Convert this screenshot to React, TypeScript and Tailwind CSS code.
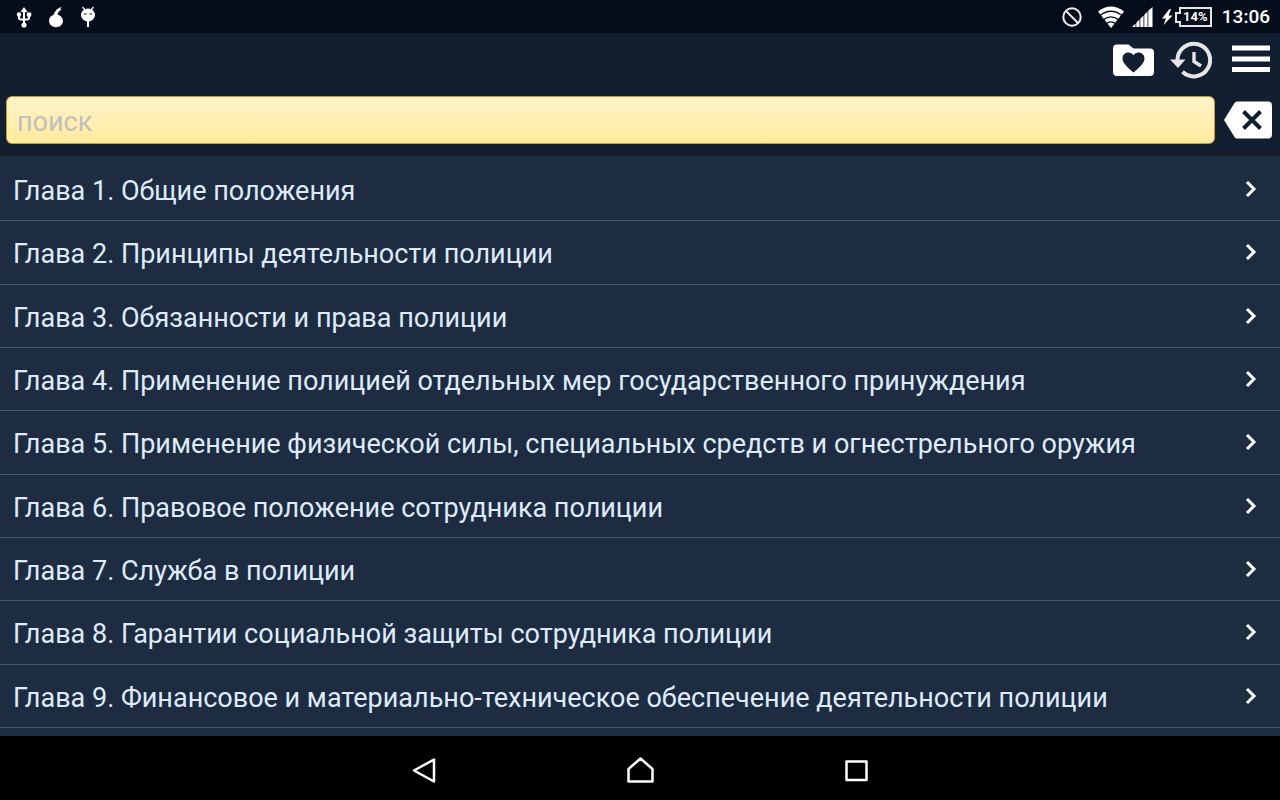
import { useState } from 'react'

const chapters = [
  'Глава 1. Общие положения',
  'Глава 2. Принципы деятельности полиции',
  'Глава 3. Обязанности и права полиции',
  'Глава 4. Применение полицией отдельных мер государственного принуждения',
  'Глава 5. Применение физической силы, специальных средств и огнестрельного оружия',
  'Глава 6. Правовое положение сотрудника полиции',
  'Глава 7. Служба в полиции',
  'Глава 8. Гарантии социальной защиты сотрудника полиции',
  'Глава 9. Финансовое и материально-техническое обеспечение деятельности полиции',
]

function StatusBar() {
  return (
    <div className="h-[33px] shrink-0 bg-[#060d1a] flex items-center justify-between pl-4 pr-[10px] text-white">
      <div className="flex items-center gap-4">
        <svg width="16" height="22" viewBox="0 0 16 22" fill="none" stroke="#fff" strokeWidth="2">
          <path d="M8 4v14M3 9v2.500q0 2 2 2h6q2 0 2-2V8" />
          <path d="M8 1l3.500 5h-7z" fill="#fff" stroke="none" />
          <circle cx="8" cy="19" r="2.600" fill="#fff" stroke="none" />
          <circle cx="3" cy="8.500" r="2.200" fill="#fff" stroke="none" />
          <path d="M10.800 6.500h4.400v4h-4.400z" fill="#fff" stroke="none" />
        </svg>
        <svg width="16" height="22" viewBox="0 0 16 22" fill="#fff">
          <path d="M5.500 9C6.500 5.500 9.500 2 13.500 1L12 3.500l2-.5C11 5 9.800 6.500 9.500 8.500c3 1 5.500 3.500 5.500 6 0 4-3 6.700-7 6.700s-7-2.700-7-6.400C1 12 2.500 9.800 5.500 9z" />
        </svg>
        <svg width="16" height="22" viewBox="0 0 16 22" fill="#fff">
          <path d="M2.500 1l2.500 3M13.500 1L11 4" stroke="#fff" strokeWidth="1.300" />
          <ellipse cx="8" cy="9" rx="7" ry="6.500" />
          <path d="M4 8h2.500M9.500 8H12" stroke="#060d1a" strokeWidth="1.200" />
          <path d="M7 15h2v6H7z" />
        </svg>
      </div>
      <div className="flex items-center">
        <svg width="20" height="20" viewBox="0 0 20 20" fill="none" stroke="#eee" strokeWidth="2">
          <circle cx="10" cy="10" r="8.700" />
          <path d="M4 4l12 12" />
        </svg>
        <svg className="ml-4" width="26" height="22" viewBox="0 0 26 22">
          <path d="M0 5.500Q13-4.500 26 5.500L13 22z" fill="#fff" />
          <path d="M2 9.500q11-8.500 22 0M5.500 13.800q7.500-5.800 15 0M8.500 17.600q4.500-3.500 9 0" fill="none" stroke="#060d1a" strokeWidth="1.300" />
        </svg>
        <svg className="ml-2" width="21" height="20" viewBox="0 0 21 20" fill="#fff">
          <path d="M0 20l3.500-3.500V20zM4.300 15.700l3.200-3.200V20H4.300zM8.300 11.700l3.200-3.200V20H8.300zM12.300 7.700l3.200-3.200V20h-3.200zM16.300 3.700L20.500 0v20h-4.200z" />
        </svg>
        <svg className="ml-2" width="12" height="18" viewBox="0 0 12 18" fill="#fff">
          <path d="M8.500 1L1 10.500h4L2.500 17 11.500 7.500h-4L10 1z" />
        </svg>
        <div className="relative ml-0.5 h-5 w-[37px]">
          <svg className="absolute inset-0" width="37" height="20" viewBox="0 0 37 20" fill="none" stroke="#e5e5e5" strokeWidth="2">
            <path d="M5 1h31v18H5v-4H1V6h4z" />
          </svg>
          <span className="absolute inset-0 pl-1 text-center text-[13px] leading-5 font-bold">14%</span>
        </div>
        <span className="ml-[10px] text-[19px] leading-6 font-medium">13:06</span>
      </div>
    </div>
  )
}

function NavBar() {
  return (
    <nav className="h-16 shrink-0 bg-black flex items-center justify-center gap-[176px] pt-1">
      <button aria-label="Назад" className="w-10 flex justify-center">
        <svg width="28" height="28" viewBox="0 0 28 28" fill="none" stroke="#fff" strokeWidth="2.500">
          <path d="M24 3.500v22L4 14.500z" strokeLinejoin="round" />
        </svg>
      </button>
      <button aria-label="Домой" className="w-10 flex justify-center">
        <svg width="28" height="28" viewBox="0 0 28 28" fill="none" stroke="#fff" strokeWidth="2.500">
          <path d="M14.500 2.500l12 10.500V25.500h-24V13z" strokeLinejoin="round" />
        </svg>
      </button>
      <button aria-label="Обзор" className="w-10 flex justify-center">
        <svg width="28" height="28" viewBox="0 0 28 28" fill="none" stroke="#fff" strokeWidth="2.500">
          <path d="M4.500 5.500h20v18.500h-20z" strokeLinejoin="round" />
        </svg>
      </button>
    </nav>
  )
}

export default function App() {
  const [query, setQuery] = useState('')

  const visible = chapters.filter(title => title.toLowerCase().includes(query.toLowerCase()))

  return (
    <div className="h-screen flex flex-col overflow-hidden bg-[#1d2c41] font-[Roboto,sans-serif]">
      <StatusBar />

      <header className="shrink-0 bg-[#121f30] border-b-3 border-[#141a22]">
        <div className="h-[63px] flex items-start justify-end gap-4 pt-2 pr-[10px]">
          <button aria-label="Избранное">
            <svg width="42" height="38" viewBox="0 0 42 38">
              <path d="M5 3.500h11.500l5 4H38q4 0 4 4V31q0 4-4 4H5q-4 0-4-4V7.500q0-4 4-4z" fill="#fff" />
              <path d="M21.500 31.500C16 26.500 10.500 22.500 10.500 17.500c0-3.500 2.600-6 5.800-6 2 0 4 1 5.200 2.700 1.200-1.700 3.200-2.700 5.200-2.700 3.200 0 5.800 2.500 5.800 6 0 5-5.500 9-11 14z" fill="#121f30" />
            </svg>
          </button>
          <button aria-label="История">
            <svg width="42" height="38" viewBox="0 0 42 38" fill="none" stroke="#e6e6e6" strokeWidth="4">
              <path d="M7.500 19A16.300 16.300 0 1 1 12.500 30.800" />
              <path d="M0 18.500h15.500L8 27z" fill="#e6e6e6" stroke="none" />
              <path d="M24 11v9.500l7 4.500" strokeWidth="3.400" />
            </svg>
          </button>
          <button aria-label="Меню" className="ml-1">
            <svg width="38" height="38" viewBox="0 0 38 38" fill="#fff">
              <path d="M0 4.500h38v5H0zM0 15.500h38v5H0zM0 26h38v5H0z" />
            </svg>
          </button>
        </div>
        <div className="flex items-center gap-[9px] pl-[6px] pr-2 pb-[9px]">
          <input
            type="text"
            aria-label="Поиск"
            placeholder="поиск"
            value={query}
            onChange={(e) => setQuery(e.target.value)}
            className="h-12 min-w-0 flex-1 rounded-md border border-[#c99a2c] bg-linear-to-b from-[#fff3c9] to-[#ffeb9c] px-[10px] pt-1 text-[27px] text-[#1d2c41] outline-none placeholder:text-[#bfbfbf]"
          />
          <button aria-label="Очистить" onClick={() => setQuery('')}>
            <svg width="48" height="38" viewBox="0 0 48 38">
              <path d="M13 0.500h31q4 0 4 4v29q0 4-4 4H13q-1.500 0-2.500-1.500L0 19 10.500 2q1-1.500 2.500-1.500z" fill="#fff" />
              <path d="M19.500 10.500l17 17M36.500 10.500l-17 17" stroke="#121f30" strokeWidth="4" />
            </svg>
          </button>
        </div>
      </header>

      <main className="flex-1 min-h-0 overflow-hidden pt-0.5 pb-2">
        <ul className="h-full grid grid-rows-9">
          {visible.map(title => (
            <li key={title} className="border-b border-[#405873]">
              <button className="w-full h-full flex items-center justify-between pl-[13px] pr-[22px] pt-1 text-left text-[27px] leading-8 text-[#dfebfa]">
                <span>{title}</span>
                <svg className="mb-1" width="14" height="20" viewBox="0 0 14 20" fill="none" stroke="#fff" strokeWidth="3">
                  <path d="M3 3l7 7-7 7" />
                </svg>
              </button>
            </li>
          ))}
        </ul>
      </main>

      <NavBar />
    </div>
  )
}
